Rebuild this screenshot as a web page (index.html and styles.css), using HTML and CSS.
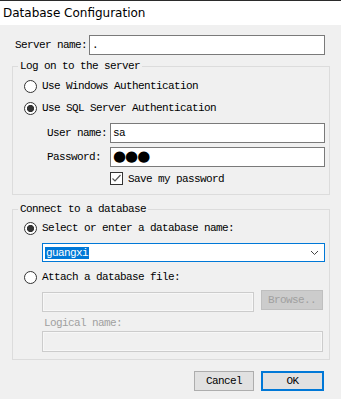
FILE: index.html
```html
<!doctype html>
<html lang="en">
<head>
  <meta charset="utf-8">
  <title>Database Configuration</title>
  <link rel="stylesheet" href="styles.css">
</head>
<body>
  <div class="titlebar">Database Configuration</div>

  <div class="dialog">
    <div class="server-row">
      <label>Server name:</label>
      <div class="field">.</div>
    </div>

    <fieldset class="group logon">
      <legend>Log on to the server</legend>
      <div class="radio-row"><span class="radio"></span>Use Windows Authentication</div>
      <div class="radio-row"><span class="radio checked"></span>Use SQL Server Authentication</div>
      <div class="cred-row">
        <label>User name:</label>
        <div class="field">sa</div>
      </div>
      <div class="cred-row">
        <label>Password:</label>
        <div class="field pw">&#9679;&#9679;&#9679;</div>
      </div>
      <div class="check-row">
        <span class="check">
          <svg width="11" height="11" viewBox="0 0 11 11"><path d="M1.5 5.5 L4 8 L9.5 2" fill="none" stroke="#555" stroke-width="1.2"/></svg>
        </span>
        Save my password
      </div>
    </fieldset>

    <fieldset class="group connect">
      <legend>Connect to a database</legend>
      <div class="radio-row"><span class="radio checked"></span>Select or enter a database name:</div>
      <div class="combo">
        <span class="sel">guangxi</span>
        <svg class="chev" width="9" height="6" viewBox="0 0 9 6"><path d="M1 1 L4.5 4.5 L8 1" fill="none" stroke="#444" stroke-width="1"/></svg>
      </div>
      <div class="radio-row attach"><span class="radio"></span>Attach a database file:</div>
      <div class="file-row">
        <div class="field disabled file"></div>
        <div class="btn disabled browse">Browse..</div>
      </div>
      <div class="logical-label">Logical name:</div>
      <div class="field disabled logical"></div>
    </fieldset>

    <div class="buttons">
      <div class="btn cancel">Cancel</div>
      <div class="btn ok">OK</div>
    </div>
  </div>
</body>
</html>
```

FILE: styles.css
```css
* {
  box-sizing: border-box;
}

body {
  margin: 0;
  height: 399px;
  overflow: hidden;
  background: #f0f0f0;
  color: #000;
  font-family: "Liberation Mono", monospace;
  font-size: 11px;
  letter-spacing: -0.6px;
}

.titlebar {
  height: 25px;
  border-top: 1px solid #2b2b2b;
  background: #fff;
  padding-left: 3px;
  font-family: "DejaVu Sans", sans-serif;
  font-size: 12px;
  letter-spacing: 0;
  line-height: 24px;
}

.dialog {
  padding: 10px 11px 0 12px;
}

.server-row {
  display: flex;
  align-items: center;
  height: 20px;
  margin-right: 5px;
}

.server-row label {
  width: 77px;
  padding-left: 3px;
}

.field {
  flex: 1;
  height: 20px;
  border: 1px solid #7a7a7a;
  background: #fff;
  padding-left: 2px;
  line-height: 18px;
}

.group {
  margin: 5px 0 0;
  padding: 3px 4px 9px 0;
  border: 1px solid #dcdcdc;
  min-width: 0;
}

.group legend {
  margin-left: 5px;
  padding: 0 2px;
  line-height: 12px;
}

.group > div {
  margin-left: 11px;
}

.connect {
  margin-top: 8px;
  padding: 2px 4px 7px 0;
}

.radio-row {
  display: flex;
  align-items: center;
  height: 22px;
}

.radio {
  width: 13px;
  height: 13px;
  margin-right: 5px;
  border: 1px solid #333;
  border-radius: 50%;
  background: #fff;
}

.radio.checked {
  background: radial-gradient(circle, #333 3.3px, #fff 3.9px);
}

.cred-row {
  display: flex;
  align-items: center;
  height: 20px;
  margin-top: 4px;
}

.cred-row label {
  width: 86px;
  padding-left: 23px;
}

.pw {
  font-family: "DejaVu Sans", sans-serif;
  font-size: 15px;
  letter-spacing: -1px;
  line-height: 17px;
}

.check-row {
  display: flex;
  align-items: center;
  height: 13px;
  margin-top: 5px;
  padding-left: 86px;
}

.check {
  width: 13px;
  height: 13px;
  margin-right: 5px;
  border: 1px solid #333;
  background: #fff;
}

.check svg {
  display: block;
}

.group > .combo {
  display: flex;
  align-items: center;
  justify-content: space-between;
  height: 19px;
  margin: 4px 0 0 29px;
  border: 1px solid #0078d7;
  background: #fff;
}

.sel {
  margin-left: 2px;
  padding: 0 1px;
  line-height: 12px;
  background: #0078d7;
  color: #fff;
}

.chev {
  margin-right: 5px;
}

.attach {
  margin-top: 4px;
}

.group > .file-row {
  display: flex;
  align-items: flex-start;
  margin: 2px 0 0 29px;
}

.field.disabled {
  background: #f0f0f0;
  border-color: #cccccc;
  box-shadow: inset 0 0 0 1px #f7f7f7;
}

.file {
  flex: none;
  width: 212px;
  margin-top: 2px;
}

.btn {
  height: 20px;
  line-height: 18px;
  text-align: center;
  border: 1px solid #adadad;
  background: #e1e1e1;
}

.btn.disabled {
  width: 62px;
  margin-left: 7px;
  border-color: #bfbfbf;
  background: #cccccc;
  color: #a0a0a0;
}

.group > .logical-label {
  margin: 5px 0 0 31px;
  line-height: 12px;
  color: #a0a0a0;
}

.group > .logical {
  height: 21px;
  margin: 2px 2px 0 29px;
}

.buttons {
  display: flex;
  justify-content: flex-end;
  gap: 7px;
  margin-top: 11px;
  padding-right: 6px;
}

.cancel {
  width: 60px;
}

.ok {
  width: 63px;
  border: 2px solid #0078d7;
  line-height: 16px;
}
```
